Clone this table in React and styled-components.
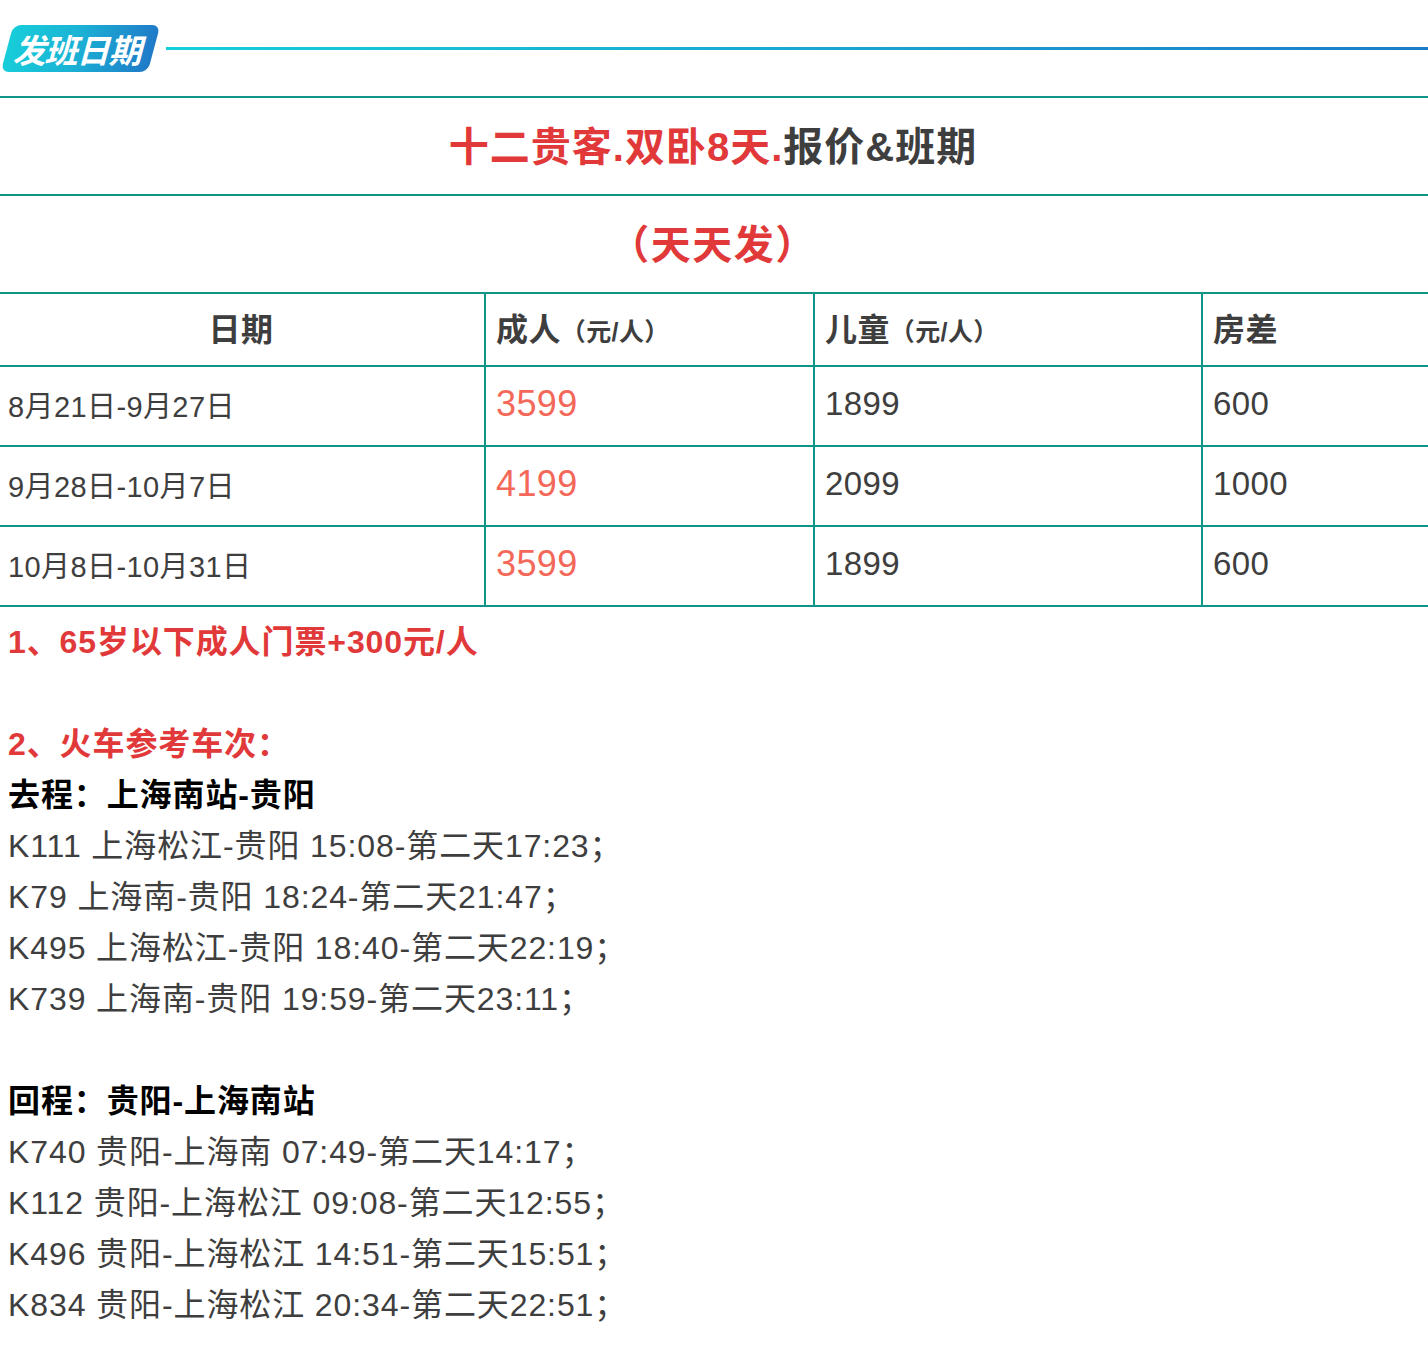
import React from 'react';
import styled, { createGlobalStyle } from 'styled-components';

//============== CSS - basics =================
const GlobalStyle = createGlobalStyle`
    html, body {
        margin: 0;
        padding: 0;
        background: #fff;
    }
    body {
        font-family: "Liberation Sans", "Noto Sans CJK SC", sans-serif;
        color: #3e3e3e;
    }
`;

const Page = styled.div`
    width: 1428px;
    height: 1354px;
    overflow: hidden;
    background: #fff;
`;

//============== CSS - section title =================
const SectionHead = styled.div`
    display: flex;
    align-items: center;
    height: 96px;
    gap: 12px;
`;

const Badge = styled.div`
    margin-left: 7px;
    width: 147px;
    height: 47px;
    border-radius: 8px;
    transform: skewX(-15deg);
    background: linear-gradient(90deg, #17cdd9 0%, #1bb3d5 45%, #1f7ac8 100%);
    display: flex;
    align-items: center;
    justify-content: center;
    color: #fff;
    font-size: 33px;
    font-weight: 700;
    letter-spacing: -1px;
`;

const HeadLine = styled.div`
    flex: 1;
    height: 3px;
    background: linear-gradient(90deg, #14d0d8 0%, #1a9fd0 60%, #1c7cc8 100%);
`;

//============== CSS - table =================
const Table = styled.table`
    width: 1428px;
    border-collapse: collapse;
    table-layout: fixed;
`;

const Cell = styled.td`
    border: 2px solid #0f9488;
    padding: 0 10px 5px;
    height: ${p => p.$h || 73}px;
    text-align: ${p => (p.$center ? 'center' : 'left')};
    vertical-align: middle;
    font-size: ${p => p.$size || 29}px;
    font-weight: ${p => (p.$bold ? 700 : 400)};
    letter-spacing: ${p => p.$ls || 0.4}px;
    color: ${p => p.$color || '#3e3e3e'};
    &:first-child { border-left: none; padding-left: 8px; }
    &:last-child { border-right: none; }
`;

const Red = styled.span`
    color: #e1393a;
`;

const Unit = styled.span`
    font-size: 25px;
    font-weight: 700;
`;

//============== CSS - notes =================
const Notes = styled.div`
    padding: 10px 8px 0;
    font-size: 32px;
    line-height: 51px;
    letter-spacing: 0.9px;
    color: #3e3e3e;
`;

const Line = styled.div`
    min-height: 51px;
    white-space: nowrap;
    font-weight: ${p => (p.$bold ? 700 : 400)};
    color: ${p => p.$color || 'inherit'};
`;

const rows = [
    { date: '8月21日-9月27日', adult: '3599', child: '1899', room: '600' },
    { date: '9月28日-10月7日', adult: '4199', child: '2099', room: '1000' },
    { date: '10月8日-10月31日', adult: '3599', child: '1899', room: '600' },
];

const goTrains = [
    'K111 上海松江-贵阳 15:08-第二天17:23；',
    'K79 上海南-贵阳 18:24-第二天21:47；',
    'K495 上海松江-贵阳 18:40-第二天22:19；',
    'K739 上海南-贵阳 19:59-第二天23:11；',
];

const backTrains = [
    'K740 贵阳-上海南 07:49-第二天14:17；',
    'K112 贵阳-上海松江 09:08-第二天12:55；',
    'K496 贵阳-上海松江 14:51-第二天15:51；',
    'K834 贵阳-上海松江 20:34-第二天22:51；',
];

export default function App() {
    return (
        <Page>
            <GlobalStyle />
            <SectionHead>
                <Badge>发班日期</Badge>
                <HeadLine />
            </SectionHead>

            <Table>
                <colgroup>
                    <col style={{ width: 485 }} />
                    <col style={{ width: 329 }} />
                    <col style={{ width: 388 }} />
                    <col style={{ width: 226 }} />
                </colgroup>
                <tbody>
                    <tr>
                        <Cell colSpan={4} $center $bold $size={40} $h={91} $ls={1}>
                            <Red>十二贵客.双卧8天.</Red>报价&amp;班期
                        </Cell>
                    </tr>
                    <tr>
                        <Cell colSpan={4} $center $bold $size={40} $h={91} $ls={1.5} $color="#e1393a">
                            （天天发）
                        </Cell>
                    </tr>
                    <tr>
                        <Cell $center $bold $size={32} $h={66}>日期</Cell>
                        <Cell $bold $size={32} $h={66}>成人<Unit>（元/人）</Unit></Cell>
                        <Cell $bold $size={32} $h={66}>儿童<Unit>（元/人）</Unit></Cell>
                        <Cell $bold $size={32} $h={66}>房差</Cell>
                    </tr>
                    {rows.map(r => (
                        <tr key={r.date}>
                            <Cell>{r.date}</Cell>
                            <Cell $size={36} $color="#f4685a">{r.adult}</Cell>
                            <Cell $size={33}>{r.child}</Cell>
                            <Cell $size={33}>{r.room}</Cell>
                        </tr>
                    ))}
                </tbody>
            </Table>

            <Notes>
                <Line $bold $color="#e1393a">1、65岁以下成人门票+300元/人</Line>
                <Line />
                <Line $bold $color="#e1393a">2、火车参考车次：</Line>
                <Line $bold $color="#000">去程：上海南站-贵阳</Line>
                {goTrains.map(t => <Line key={t}>{t}</Line>)}
                <Line />
                <Line $bold $color="#000">回程：贵阳-上海南站</Line>
                {backTrains.map(t => <Line key={t}>{t}</Line>)}
            </Notes>
        </Page>
    );
}
